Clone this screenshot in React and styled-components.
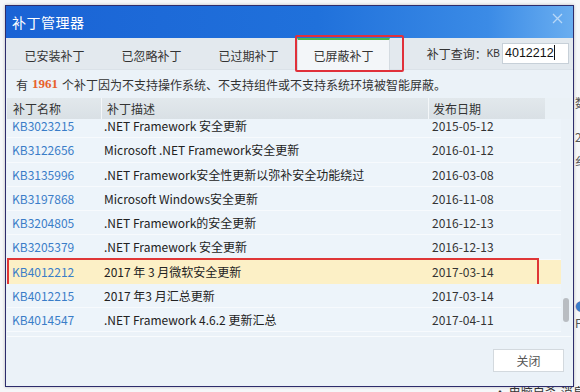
import React from "react";
import styled, { createGlobalStyle } from "styled-components";

const GlobalStyle = createGlobalStyle`
  html, body {
    margin: 0;
    padding: 0;
    background: #f5f7f9;
    overflow: hidden;
  }
  * {
    box-sizing: border-box;
  }
`;

const FONT = `"Noto Sans CJK SC", "Liberation Sans", sans-serif`;

const Page = styled.div`
  position: relative;
  width: 580px;
  height: 392px;
  padding: 5px 6px 0 5px;
  font-family: ${FONT};
  font-size: 12px;
  color: #222;
`;

const Behind = styled.div`
  position: absolute;
  font-family: ${FONT};
  font-size: 12px;
  line-height: 14px;
  color: ${(p) => p.color || "#555"};
  left: ${(p) => p.x}px;
  top: ${(p) => p.y}px;
  white-space: nowrap;
`;

const Window = styled.div`
  position: relative;
  width: 569px;
  height: 382px;
  border: 1px solid #2d2c6c;
  background: #ebf2f8;
  display: flex;
  flex-direction: column;
  box-shadow: 0 0 3px rgba(0, 0, 0, 0.25);
`;

const TitleBar = styled.div`
  height: 32px;
  flex: none;
  display: flex;
  align-items: center;
  justify-content: space-between;
  padding: 0 10px 0 6px;
  background: linear-gradient(90deg, #1a63d5 0%, #2071db 55%, #3b8be6 85%, #6aaef0 100%);
`;

const Title = styled.div`
  color: #fff;
  font-size: 14px;
  letter-spacing: 0.5px;
`;

const CloseX = styled.svg`
  width: 11px;
  height: 11px;
  margin-top: -8px;
`;

const TabBar = styled.div`
  height: 32px;
  flex: none;
  display: flex;
  align-items: stretch;
  background: #e3e9ee;
  border-bottom: 1px solid #dbe2e8;
`;

const Tab = styled.div`
  position: relative;
  width: ${(p) => (p.active ? 93 : 97)}px;
  display: flex;
  align-items: center;
  justify-content: center;
  color: #333;
  font-size: 12px;
  background: ${(p) => (p.active ? "#f3f6f9" : "transparent")};
  border-top: 2px solid ${(p) => (p.active ? "#4cb84a" : "transparent")};
  border-left: 1px solid ${(p) => (p.active ? "#d4dbe1" : "transparent")};
  border-right: 1px solid ${(p) => (p.active ? "#d4dbe1" : "transparent")};
  margin-bottom: -1px;

  ${(p) =>
    p.marked &&
    `
    &::after {
      content: "";
      position: absolute;
      left: -3px;
      right: -15px;
      top: -5px;
      bottom: -2px;
      border: 2px solid #e0303a;
      border-radius: 2px;
    }
  `}
`;

const Search = styled.div`
  margin-left: auto;
  display: flex;
  align-items: center;
  padding-right: 4px;
`;

const SearchLabel = styled.span`
  font-size: 12px;
  color: #333;
`;

const KB = styled.span`
  font-family: "Liberation Sans", sans-serif;
  font-size: 10px;
  color: #333;
  margin-right: 2px;
`;

const SearchInput = styled.div`
  width: 67px;
  height: 21px;
  background: #fff;
  border: 1px solid #c7d0d8;
  font-family: "Liberation Sans", sans-serif;
  font-size: 12.5px;
  line-height: 19px;
  padding-left: 2px;
  color: #111;
`;

const Caret = styled.span`
  display: inline-block;
  width: 1px;
  height: 15px;
  background: #111;
  vertical-align: -3px;
`;

const Info = styled.div`
  height: 28px;
  flex: none;
  display: flex;
  align-items: center;
  padding-left: 10px;
  font-size: 12px;
  color: #333;
`;

const Count = styled.b`
  color: #e8612c;
  font-family: "Liberation Serif", serif;
  font-size: 13px;
  margin: 0 4px;
`;

const Table = styled.div`
  margin: 0 2px 0 1px;
  display: flex;
  flex-direction: column;
  height: 239px;
  flex: none;
  border-bottom: 1px solid #f8fbfd;
`;

const HeaderRow = styled.div`
  position: relative;
  z-index: 1;
  height: 21px;
  flex: none;
  display: grid;
  grid-template-columns: 94px 327px 117px 1fr;
  background: #f0f4f7;
`;

const HeaderCell = styled.div`
  display: flex;
  align-items: center;
  padding-left: ${(p) => p.pad}px;
  background: ${(p) => (p.blank ? "#eaf1f6" : "linear-gradient(#e2e8ec, #d9e0e5)")};
  border-left: 1px solid ${(p) => (p.line ? "#f4f7f9" : "transparent")};
  color: #333;
  font-size: 12px;
`;

const Body = styled.div`
  flex: 1;
  display: flex;
  overflow: hidden;
`;

const List = styled.div`
  flex: 1;
  display: flex;
  flex-direction: column;
`;

const Row = styled.div`
  position: relative;
  flex: none;
  height: 24.25px;
  display: grid;
  grid-template-columns: 94px 327px 1fr;
  align-items: center;
  background: ${(p) => (p.selected ? "#fcf0c6" : "#edf4fa")};
  border-bottom: 1px solid ${(p) => (p.selected ? "#fcf0c6" : "#f7fafd")};
  &:first-child {
    margin-top: -5px;
  }

  ${(p) =>
    p.marked &&
    `
    &::after {
      content: "";
      position: absolute;
      left: 0;
      right: 22px;
      top: -2px;
      bottom: -3px;
      border: 2px solid #df3636;
    }
  `}
`;

const Name = styled.div`
  padding-left: 5px;
  color: #3a7dc8;
  font-size: 12px;
`;

const Desc = styled.div`
  padding-left: 3px;
  color: #222;
  font-size: 12px;
  white-space: nowrap;
`;

const DateCell = styled.div`
  padding-left: 4px;
  color: #333;
  font-size: 12px;
`;

const Track = styled.div`
  width: 10px;
  flex: none;
  display: flex;
  flex-direction: column;
  align-items: center;
  padding-top: 179px;
`;

const Thumb = styled.div`
  width: 6px;
  height: 24px;
  border-radius: 3px;
  background: #b9bdc2;
`;

const Footer = styled.div`
  flex: 1;
  display: flex;
  justify-content: flex-end;
  align-items: flex-start;
  padding: 12px 9px 0 0;
`;

const Button = styled.div`
  width: 71px;
  height: 23px;
  display: flex;
  align-items: center;
  justify-content: center;
  background: #fff;
  border: 1px solid #d3d9de;
  color: #555;
  font-size: 12px;
`;

const rows = [
  ["KB3023215", ".NET Framework 安全更新", "2015-05-12"],
  ["KB3122656", "Microsoft .NET Framework安全更新", "2016-01-12"],
  ["KB3135996", ".NET Framework安全性更新以弥补安全功能绕过", "2016-03-08"],
  ["KB3197868", "Microsoft Windows安全更新", "2016-11-08"],
  ["KB3204805", ".NET Framework的安全更新", "2016-12-13"],
  ["KB3205379", ".NET Framework 安全更新", "2016-12-13"],
  ["KB4012212", "2017 年 3 月微软安全更新", "2017-03-14", true],
  ["KB4012215", "2017 年3 月汇总更新", "2017-03-14"],
  ["KB4014547", ".NET Framework 4.6.2 更新汇总", "2017-04-11"],
];

export default function App() {
  return (
    <Page>
      <GlobalStyle />
      <Behind x={575} y={96}>数</Behind>
      <Behind x={575} y={130}>2</Behind>
      <Behind x={575} y={154}>纟</Behind>
      <Behind x={575} y={300} color="#3a7dc8">●</Behind>
      <Behind x={575} y={316}>F</Behind>
      <Behind x={494} y={385} color="#333">• 电脑自杀-消息</Behind>
      <Window>
        <TitleBar>
          <Title>补丁管理器</Title>
          <CloseX viewBox="0 0 11 11">
            <path d="M1 1 L10 10 M10 1 L1 10" stroke="rgba(255,255,255,0.55)" strokeWidth="1.3" />
          </CloseX>
        </TitleBar>
        <TabBar>
          <Tab>已安装补丁</Tab>
          <Tab>已忽略补丁</Tab>
          <Tab>已过期补丁</Tab>
          <Tab active marked>已屏蔽补丁</Tab>
          <Search>
            <SearchLabel>补丁查询：</SearchLabel>
            <KB>KB</KB>
            <SearchInput>
              4012212<Caret />
            </SearchInput>
          </Search>
        </TabBar>
        <Info>
          有<Count>1961</Count>个补丁因为不支持操作系统、不支持组件或不支持系统环境被智能屏蔽。
        </Info>
        <Table>
          <HeaderRow>
            <HeaderCell pad={5}>补丁名称</HeaderCell>
            <HeaderCell pad={5} line>补丁描述</HeaderCell>
            <HeaderCell pad={4} line>发布日期</HeaderCell>
            <HeaderCell blank />
          </HeaderRow>
          <Body>
            <List>
              {rows.map(([kb, desc, date, sel]) => (
                <Row key={kb + date} selected={sel} marked={sel}>
                  <Name>{kb}</Name>
                  <Desc>{desc}</Desc>
                  <DateCell>{date}</DateCell>
                </Row>
              ))}
            </List>
            <Track>
              <Thumb />
            </Track>
          </Body>
        </Table>
        <Footer>
          <Button>关闭</Button>
        </Footer>
      </Window>
    </Page>
  );
}
